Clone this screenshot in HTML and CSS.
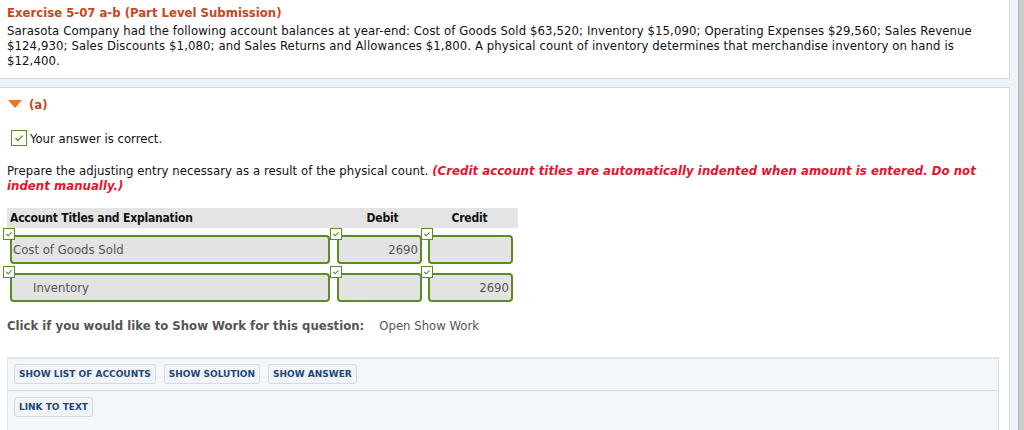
FILE: index.html
```html
<!DOCTYPE html>
<html>
<head>
<meta charset="utf-8">
<link rel="stylesheet" href="styles.css">
</head>
<body>
<div class="page">
  <div class="main">
    <section class="intro">
      <h1 class="ex-title">Exercise 5-07 a-b (Part Level Submission)</h1>
      <p class="ex-text">Sarasota Company had the following account balances at year-end: Cost of Goods Sold $63,520; Inventory $15,090; Operating Expenses $29,560; Sales Revenue $124,930; Sales Discounts $1,080; and Sales Returns and Allowances $1,800. A physical count of inventory determines that merchandise inventory on hand is $12,400.</p>
    </section>
    <section class="part">
      <div class="part-head"><span class="tri"></span><span class="part-label">(a)</span></div>
      <div class="correct">
        <span class="bigcheck"><svg width="12" height="12" viewBox="0 0 12 12"><path d="M2.5 6.2 L5 8.6 L9.6 3.6" fill="none" stroke="#5b8c1f" stroke-width="1.4"/></svg></span>
        <span>Your answer is correct.</span>
      </div>
      <p class="prompt">Prepare the adjusting entry necessary as a result of the physical count. <em class="warn">(Credit account titles are automatically indented when amount is entered. Do not indent manually.)</em></p>

      <div class="journal">
        <div class="jhead">
          <div class="jh-acct">Account Titles and Explanation</div>
          <div class="jh-debit">Debit</div>
          <div class="jh-credit">Credit</div>
        </div>
        <div class="jrow">
          <div class="cell c-acct"><span class="mini"><svg width="10" height="10" viewBox="0 0 10 10"><path d="M2.3 5 L4.2 6.8 L7.6 3.3" fill="none" stroke="#5b8c1f" stroke-width="1.1"/></svg></span><div class="field">Cost of Goods Sold</div></div>
          <div class="cell c-debit"><span class="mini"><svg width="10" height="10" viewBox="0 0 10 10"><path d="M2.3 5 L4.2 6.8 L7.6 3.3" fill="none" stroke="#5b8c1f" stroke-width="1.1"/></svg></span><div class="field num">2690</div></div>
          <div class="cell c-credit"><span class="mini"><svg width="10" height="10" viewBox="0 0 10 10"><path d="M2.3 5 L4.2 6.8 L7.6 3.3" fill="none" stroke="#5b8c1f" stroke-width="1.1"/></svg></span><div class="field num"></div></div>
        </div>
        <div class="jrow">
          <div class="cell c-acct"><span class="mini"><svg width="10" height="10" viewBox="0 0 10 10"><path d="M2.3 5 L4.2 6.8 L7.6 3.3" fill="none" stroke="#5b8c1f" stroke-width="1.1"/></svg></span><div class="field indent">Inventory</div></div>
          <div class="cell c-debit"><span class="mini"><svg width="10" height="10" viewBox="0 0 10 10"><path d="M2.3 5 L4.2 6.8 L7.6 3.3" fill="none" stroke="#5b8c1f" stroke-width="1.1"/></svg></span><div class="field num"></div></div>
          <div class="cell c-credit"><span class="mini"><svg width="10" height="10" viewBox="0 0 10 10"><path d="M2.3 5 L4.2 6.8 L7.6 3.3" fill="none" stroke="#5b8c1f" stroke-width="1.1"/></svg></span><div class="field num">2690</div></div>
        </div>
      </div>

      <div class="showwork">
        <strong>Click if you would like to Show Work for this question:</strong>
        <span class="open">Open Show Work</span>
      </div>

      <div class="tools">
        <div class="tool-row">
          <button class="btn">SHOW LIST OF ACCOUNTS</button>
          <button class="btn">SHOW SOLUTION</button>
          <button class="btn">SHOW ANSWER</button>
        </div>
        <div class="tool-row last">
          <button class="btn">LINK TO TEXT</button>
        </div>
      </div>
    </section>
  </div>
  <div class="scroll"></div>
</div>
</body>
</html>
```
FILE: styles.css
```css
* { box-sizing: border-box; }
html, body { margin: 0; padding: 0; }
body {
  font-family: "DejaVu Sans Condensed", "DejaVu Sans", Verdana, sans-serif;
  font-size: 13px;
  color: #111;
  background: #eef3f9;
}
.page { display: flex; height: 430px; overflow: hidden; }
.main { width: 1018px; }
.scroll { width: 6px; background: #cbcbcb; border-left: 1px solid #b3b3b3; }

.intro {
  width: 1010px;
  height: 79px;
  background: #fff;
  border-right: 1px solid #cfd8e3;
  border-bottom: 1px solid #cfd8e3;
  padding: 4px 10px 0 7px;
}
.ex-title {
  margin: 0;
  font-size: 13px;
  line-height: 17px;
  font-weight: bold;
  color: #c8461d;
}
.ex-text {
  margin: 2px 0 0;
  line-height: 15px;
  letter-spacing: 0.1px;
}

.part {
  width: 1010px;
  height: 360px;
  margin-top: 8px;
  background: #fff;
  border-top: 1px solid #cfd8e3;
  border-right: 1px solid #cfd8e3;
  padding: 8px 10px 0 7px;
}
.part-head { display: flex; align-items: center; height: 16px; gap: 7px; }
.tri {
  width: 0; height: 0;
  border-left: 7px solid transparent;
  border-right: 7px solid transparent;
  border-top: 8px solid #f3731f;
  margin-left: 1px;
}
.part-label { font-weight: bold; color: #c8461d; }

.correct {
  display: flex; align-items: center; gap: 3px;
  margin-top: 18px; margin-left: 4px; height: 16px;
}
.bigcheck {
  width: 16px; height: 16px;
  border: 1.5px solid #5e8e2a;
  background: #fff;
  display: flex; align-items: center; justify-content: center;
}
.prompt { margin: 17px 0 0; line-height: 15px; letter-spacing: 0.05px; }
.warn { color: #e8112d; font-weight: bold; font-style: italic; }

.journal { margin-top: 15px; width: 511px; }
.jhead {
  display: grid;
  grid-template-columns: 323px 91px 97px;
  height: 20px;
  background: #e4e4e4;
  font-size: 12px;
  font-weight: bold;
  line-height: 20px;
  letter-spacing: -0.2px;
}
.jh-acct { padding-left: 3px; }
.jh-debit { text-align: center; padding-left: 14px; }
.jh-credit { text-align: center; }

.jrow {
  display: grid;
  grid-template-columns: 327px 91px 93px;
  margin-left: -4px;
  height: 38px;
}
.cell { position: relative; padding: 7px 0 0 7px; }
.c-acct .field { width: 320px; }
.c-debit .field { width: 85px; }
.c-credit .field { width: 85px; }
.mini {
  position: absolute; left: 0; top: 0;
  width: 12px; height: 12px;
  border: 1px solid #5b8c1f;
  background: #fff;
  display: flex; align-items: center; justify-content: center;
  z-index: 1;
}
.field {
  height: 29px;
  border: 2px solid #5b8c1f;
  border-radius: 4px;
  background: #e3e3e3;
  color: #555;
  line-height: 25px;
  padding: 0 2px 0 1px;
  white-space: nowrap;
}
.field.num { text-align: right; }
.field.indent { padding-left: 21px; }

.showwork {
  margin-top: 13px;
  line-height: 17px;
  color: #555;
  display: flex;
  gap: 15px;
}
.showwork strong { font-weight: bold; }

.tools {
  margin-top: 23px;
  width: 992px;
  height: 80px;
  background: #f4f7fa;
  border-top: 2px solid #e2e6eb;
  border-left: 1px solid #dde3ea;
  border-right: 1px solid #d8dee5;
}
.tool-row {
  display: flex; gap: 8px;
  padding: 5px 0 0 6px;
  height: 32px;
  border-bottom: 1px solid #d3d9e1;
}
.tool-row.last { border-bottom: none; padding-top: 6px; }
.btn {
  font-family: "DejaVu Sans", Verdana, sans-serif;
  font-size: 9px;
  font-weight: bold;
  color: #23467a;
  background: #f1f4f8;
  border: 1px solid #d3d9e0;
  border-radius: 3px;
  height: 20px;
  padding: 0 4px;
  line-height: 18px;
}
```
